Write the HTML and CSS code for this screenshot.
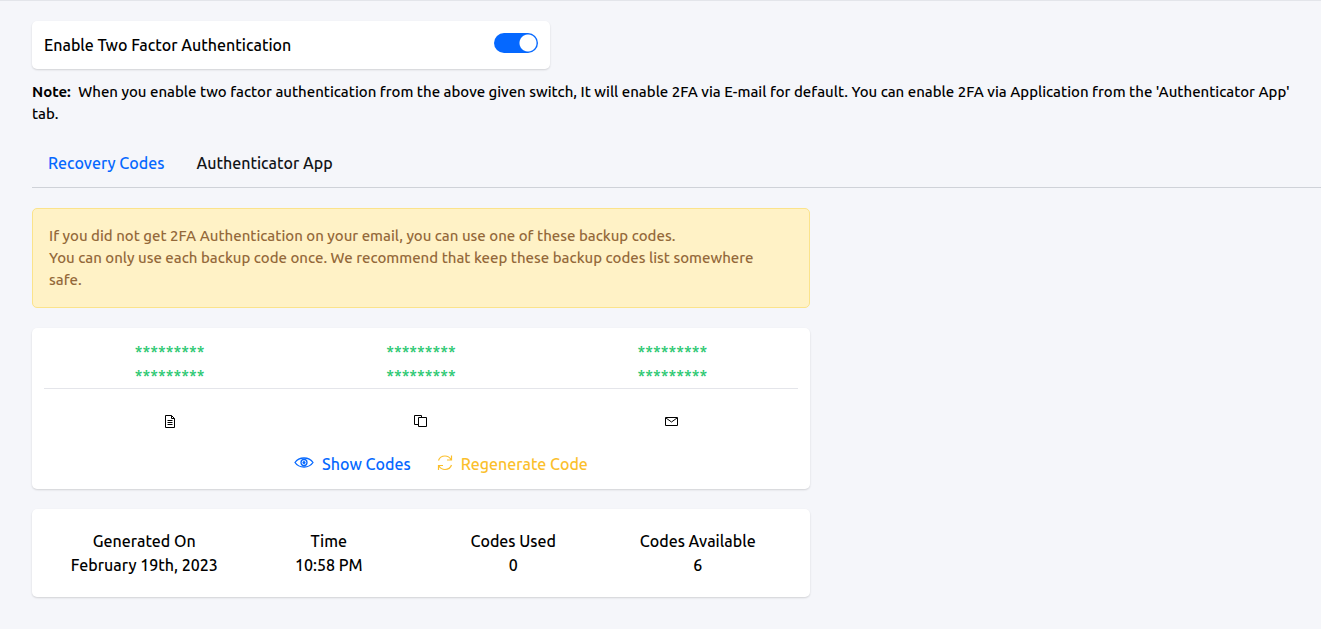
FILE: index.html
```
<!DOCTYPE html>
<html lang="en">
<head>
    <meta charset="UTF-8">
    <meta name="viewport" content="width=device-width, initial-scale=1.0">
    <title>Two Factor Authentication</title>
    <link rel="stylesheet" href="styles.css">
</head>
<body>
    <main>
        <section class="card enable-card">
            <label for="enable-2fa">Enable Two Factor Authentication</label>
            <input type="checkbox" role="switch" id="enable-2fa" class="switch" checked>
        </section>

        <p class="note"><strong>Note:</strong> When you enable two factor authentication from the above given switch, It will enable 2FA via E-mail for default. You can enable 2FA via Application from the 'Authenticator App' tab.</p>

        <nav class="tabs">
            <a href="#recovery" class="active">Recovery Codes</a>
            <a href="#authenticator">Authenticator App</a>
        </nav>

        <div class="panel" id="recovery">
            <div class="alert">
                If you did not get 2FA Authentication on your email, you can use one of these backup codes.<br>
                You can only use each backup code once. We recommend that keep these backup codes list somewhere safe.
            </div>

            <section class="card codes-card">
                <div class="codes">
                    <span>*********</span>
                    <span>*********</span>
                    <span>*********</span>
                    <span>*********</span>
                    <span>*********</span>
                    <span>*********</span>
                </div>
                <div class="export">
                    <button type="button" aria-label="Download codes">
                        <svg width="12" height="14" viewBox="0 0 12 14" fill="none" stroke="currentColor">
                            <path d="M1.5 1.5h6l3 3v9h-9z" />
                            <path d="M7.5 1.5v3h3M3.5 6.5h5M3.5 8.5h5M3.5 10.5h5" />
                        </svg>
                    </button>
                    <button type="button" aria-label="Copy codes">
                        <svg width="14" height="14" viewBox="0 0 14 14" fill="none" stroke="currentColor">
                            <path d="M4.5 10.5h-4v-9h7v2" />
                            <path d="M4.5 3.5h8v9h-8z" />
                        </svg>
                    </button>
                    <button type="button" aria-label="Email codes">
                        <svg width="14" height="14" viewBox="0 0 14 14" fill="none" stroke="currentColor">
                            <path d="M.5 3.5h12v8h-12z" />
                            <path d="M1 4l5.5 4L12 4" />
                        </svg>
                    </button>
                </div>
                <div class="actions">
                    <button type="button" class="show">
                        <svg width="20" height="16" viewBox="0 0 20 16" fill="none" stroke="currentColor" stroke-width="1.3">
                            <path d="M1 7.500C3 4.500 6.300 3 10 3S17 4.500 19 7.500c-2 3-5.300 4.500-9 4.500S3 10.500 1 7.500z" />
                            <circle cx="10" cy="7.500" r="3" />
                            <circle cx="10" cy="7.500" r="1.500" fill="currentColor" stroke="none" />
                        </svg>
                        Show Codes
                    </button>
                    <button type="button" class="regenerate">
                        <svg width="16" height="16" viewBox="0 0 16 16" fill="none" stroke="currentColor" stroke-width="1.2">
                            <path d="M1.5 5.5C2.5 2.5 5 1 8 1c2.5 0 4.7 1.3 6 3.5M14.5 .5v4.5H10" />
                            <path d="M14.5 10C13.5 13 11 14.5 8 14.5c-2.5 0-4.7-1.3-6-3.5M1.5 15V10.5H6" />
                        </svg>
                        Regenerate Code
                    </button>
                </div>
            </section>

            <dl class="card stats">
                <div><dt>Generated On</dt><dd>February 19th, 2023</dd></div>
                <div><dt>Time</dt><dd>10:58 PM</dd></div>
                <div><dt>Codes Used</dt><dd>0</dd></div>
                <div><dt>Codes Available</dt><dd>6</dd></div>
            </dl>
        </div>
    </main>
</body>
</html>
```
FILE: styles.css
```
* {
    box-sizing: border-box;
}

body {
    margin: 0;
    background-color: #f5f6fa;
    border-top: 1px solid #e3e5ea;
    color: #000000;
    font-family: Ubuntu, "Noto Sans", sans-serif;
    font-size: 16px;
    font-weight: 500;
    line-height: 24px;
}

main {
    padding: 20px 0 32px 32px;
}

button {
    padding: 0;
    border: none;
    background: none;
    color: inherit;
    font: inherit;
    cursor: pointer;
}

.card {
    margin: 0;
    background-color: #ffffff;
    border-radius: 5px;
    box-shadow: 0 1px 2px rgba(0, 0, 0, 0.15);
}

.enable-card {
    display: flex;
    justify-content: space-between;
    max-width: 518px;
    padding: 12px;
}

.switch {
    appearance: none;
    width: 44px;
    height: 20px;
    margin: 0;
    border-radius: 10px;
    /* White knob on the right when enabled */
    background: radial-gradient(circle at 34px 10px, #ffffff 8px, #0568ff 9px);
    cursor: pointer;
}

.switch:not(:checked) {
    background: radial-gradient(circle at 10px 10px, #ffffff 8px, #adb5bd 9px);
}

.note {
    margin: 12px 0 14px;
    padding-right: 8px;
    font-size: 15px;
    line-height: 22px;
}

.note strong {
    margin-right: 4px;
    font-weight: 700;
}

.tabs {
    display: flex;
    border-bottom: 1px solid #cfd2d8;
}

.tabs a {
    padding: 12px 16px;
    color: #111418;
    text-decoration: none;
}

.tabs a.active {
    color: #0568ff;
}

.panel {
    display: grid;
    gap: 20px;
    max-width: 778px;
    margin-top: 20px;
}

.alert {
    padding: 16px 32px 16px 16px;
    background-color: #fff2c6;
    border: 1px solid #fbe38b;
    border-radius: 5px;
    color: #94693a;
    font-size: 15px;
    line-height: 22px;
}

.codes-card {
    padding: 12px 12px 13px;
}

.codes,
.export {
    display: grid;
    grid-template-columns: repeat(3, 1fr);
    text-align: center;
}

.codes {
    border-bottom: 1px solid #e4e5ea;
    color: #28c76f;
}

.export {
    padding: 25px 0 24px;
}

.export svg {
    display: block;
    margin: 0 auto;
}

.actions {
    display: flex;
    justify-content: center;
    gap: 26px;
    padding-left: 40px;
}

.actions button {
    display: flex;
    gap: 8px;
}

.actions svg {
    margin-top: 3px;
}

.show {
    color: #0568ff;
}

.regenerate {
    color: #fbbf2c;
}

.stats {
    display: grid;
    grid-template-columns: repeat(4, 1fr);
    padding: 20px;
    text-align: center;
}

.stats dd {
    margin: 0;
}
```
